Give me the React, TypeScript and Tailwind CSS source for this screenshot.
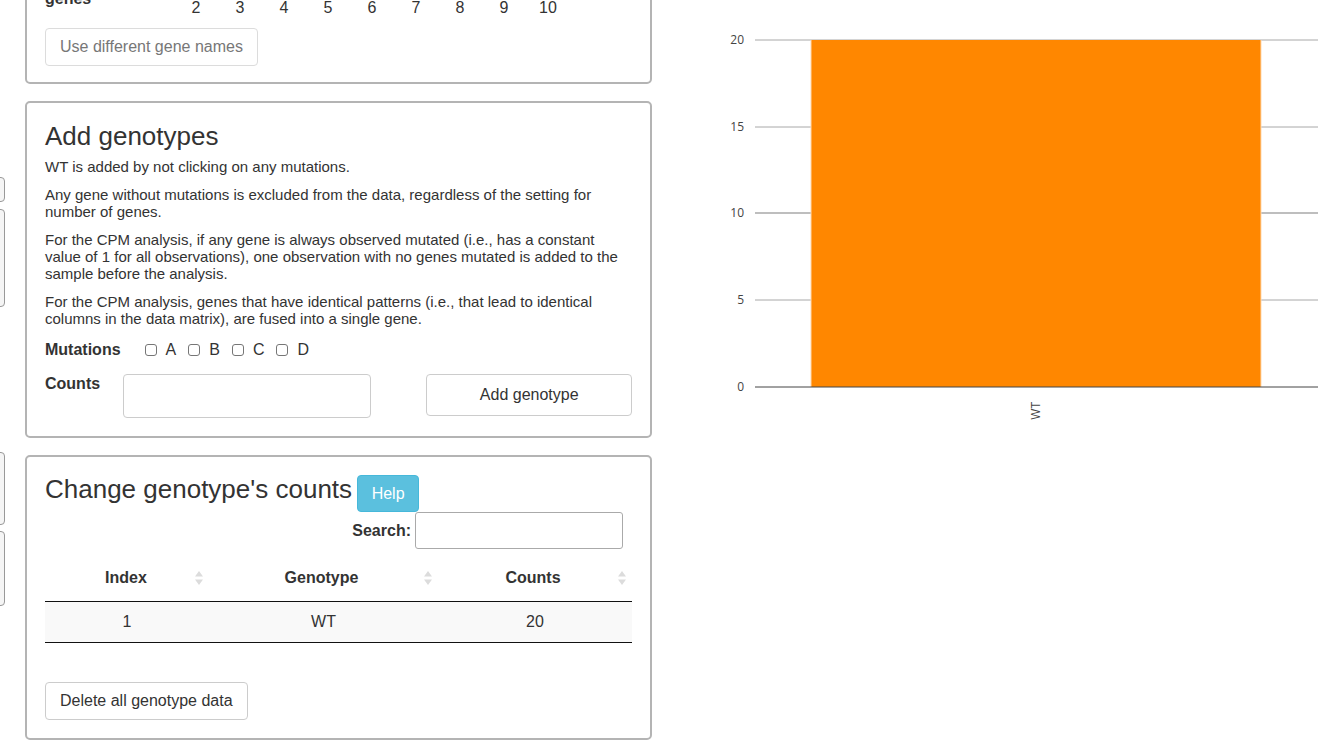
import React from "react";

const font = { fontFamily: '"Liberation Sans", Arial, sans-serif' };

const SortIcon = () => (
  <svg width="8" height="14" viewBox="0 0 8 14" className="shrink-0">
    <path d="M4 0 L8 5.5 L0 5.5 Z" fill="#dcdcdc" />
    <path d="M4 14 L8 8.5 L0 8.5 Z" fill="#dcdcdc" />
  </svg>
);

const Checkbox = ({ label }: { label: string }) => (
  <label className="flex items-center gap-[9px] mr-[12px]">
    <span className="w-[12px] h-[12px] border border-[#767676] rounded-[3px] bg-white" />
    <span>{label}</span>
  </label>
);

const Chart = () => {
  const ticks = [
    { v: "20", y: 40 },
    { v: "15", y: 127 },
    { v: "10", y: 213 },
    { v: "5", y: 300 },
  ];
  return (
    <svg width="635" height="440" viewBox="700 0 635 440" style={{ fontFamily: '"Open Sans", sans-serif' }}>
      {ticks.map((t) => (
        <g key={t.v}>
          <line x1="755" x2="1318" y1={t.y} y2={t.y} stroke="#a8a8a8" strokeWidth={t.v === "10" ? 1.6 : 1} />
          <text x="744" y={t.y + 4} textAnchor="end" fontSize="12" fill="#444">
            {t.v}
          </text>
        </g>
      ))}
      <rect x="811" y="40" width="450" height="347" fill="#ff8700" />
      <line x1="811" x2="811" y1="40" y2="387" stroke="#ffd9b0" strokeWidth="1" />
      <line x1="1261" x2="1261" y1="40" y2="387" stroke="#ffd9b0" strokeWidth="1" />
      <line x1="755" x2="1318" y1="387" y2="387" stroke="#444" strokeWidth="1" />
      <text x="744" y="391" textAnchor="end" fontSize="12" fill="#444">
        0
      </text>
      <text x="0" y="0" fontSize="12" fill="#444" textAnchor="end" transform="translate(1040 402) rotate(-90)">
        WT
      </text>
    </svg>
  );
};

export default function App() {
  return (
    <div className="w-[1335px] h-[746px] overflow-hidden bg-white text-[#333] text-[16px]" style={font}>
      <div className="flex">
        {/* edge of the sidebar */}
        <div className="w-[25px] shrink-0 overflow-hidden">
          <div className="-ml-[12px] w-[17px] h-[25px] mt-[177px] border border-[#999] rounded-[4px] bg-[#f5f5f5]" />
          <div className="-ml-[12px] w-[17px] h-[98px] mt-[7px] border border-[#999] rounded-[4px] bg-[#f5f5f5]" />
          <div className="-ml-[12px] w-[17px] h-[73px] mt-[145px] border border-[#999] rounded-[4px] bg-[#f5f5f5]" />
          <div className="-ml-[12px] w-[17px] h-[75px] mt-[6px] border border-[#999] rounded-[4px] bg-[#f5f5f5]" />
        </div>

        <div className="w-[627px] shrink-0 flex flex-col gap-[17px]">
          {/* gene number panel */}
          <div className="-mt-[52px] border-2 border-[#b4b4b4] rounded-[5px] px-[18px] pb-[16px] pt-[24px]">
            <div className="flex items-end h-[36px]">
              <div className="font-bold w-[100px] leading-[17px] mb-[3px]">
                Number of
                <br />
                genes
              </div>
              <div className="flex -mb-[10px] ml-[45px]">
                {["2", "3", "4", "5", "6", "7", "8", "9", "10"].map((n) => (
                  <span key={n} className="w-[44px] text-center first:-ml-[16px]">
                    {n}
                  </span>
                ))}
              </div>
            </div>
            <button className="mt-[18px] h-[38px] px-[14px] border border-[#dcdcdc] rounded-[4px] text-[#777] bg-white">
              Use different gene names
            </button>
          </div>

          {/* add genotypes */}
          <div className="border-2 border-[#b4b4b4] rounded-[5px] px-[18px] pt-[18px] pb-[18px]">
            <h3 className="text-[26px] leading-[30px] mb-[7px]">Add genotypes</h3>
            <div className="text-[15px] leading-[17px] flex flex-col gap-[11px]">
              <p>WT is added by not clicking on any mutations.</p>
              <p>
                Any gene without mutations is excluded from the data, regardless of the setting for number of genes.
              </p>
              <p>
                For the CPM analysis, if any gene is always observed mutated (i.e., has a constant value of 1 for all
                observations), one observation with no genes mutated is added to the sample before the analysis.
              </p>
              <p>
                For the CPM analysis, genes that have identical patterns (i.e., that lead to identical columns in the
                data matrix), are fused into a single gene.
              </p>
            </div>
            <div className="flex items-center mt-[11px]">
              <span className="font-bold mr-[24px]">Mutations</span>
              {["A", "B", "C", "D"].map((l) => (
                <Checkbox key={l} label={l} />
              ))}
            </div>
            <div className="flex items-start mt-[12px]">
              <span className="font-bold w-[78px] leading-[20px]">Counts</span>
              <div className="w-[249px] h-[44px] border border-[#ccc] rounded-[4px]" />
              <button className="ml-[55px] w-[206px] h-[42px] border border-[#ccc] rounded-[4px] bg-white">
                Add genotype
              </button>
            </div>
          </div>

          {/* change counts */}
          <div className="border-2 border-[#b4b4b4] rounded-[5px] px-[18px] pt-[18px] pb-[18px]">
            <div className="flex items-start">
              <h3 className="text-[26px] leading-[30px] -mt-[1px]">Change genotype's counts</h3>
              <button className="ml-[5px] w-[62px] h-[37px] rounded-[4px] bg-[#5bc0de] border border-[#46b8da] text-white">
                Help
              </button>
            </div>
            <div className="flex items-center justify-end mr-[9px]">
              <span className="font-bold mr-[4px]">Search:</span>
              <div className="w-[208px] h-[37px] border border-[#aaa] rounded-[3px]" />
            </div>
            <div className="mt-[4px]">
              <div className="flex h-[49px] pt-[1px] items-center font-bold border-b border-[#111]">
                <div className="w-[164px] flex items-center">
                  <span className="flex-1 text-center pl-[12px]">Index</span>
                  <span className="mr-[6px]">
                    <SortIcon />
                  </span>
                </div>
                <div className="w-[229px] flex items-center">
                  <span className="flex-1 text-center pl-[10px]">Genotype</span>
                  <span className="mr-[6px]">
                    <SortIcon />
                  </span>
                </div>
                <div className="flex-1 flex items-center">
                  <span className="flex-1 text-center pl-[10px]">Counts</span>
                  <span className="mr-[6px]">
                    <SortIcon />
                  </span>
                </div>
              </div>
              <div className="flex h-[41px] items-center bg-[#f9f9f9] border-b border-[#111]">
                <div className="w-[164px] text-center">1</div>
                <div className="w-[229px] text-center">WT</div>
                <div className="flex-1 text-center">20</div>
              </div>
            </div>
            <button className="mt-[39px] h-[38px] px-[14px] border border-[#ccc] rounded-[4px] bg-white">
              Delete all genotype data
            </button>
          </div>
        </div>

        <div className="ml-[48px]">
          <Chart />
        </div>
      </div>
    </div>
  );
}
